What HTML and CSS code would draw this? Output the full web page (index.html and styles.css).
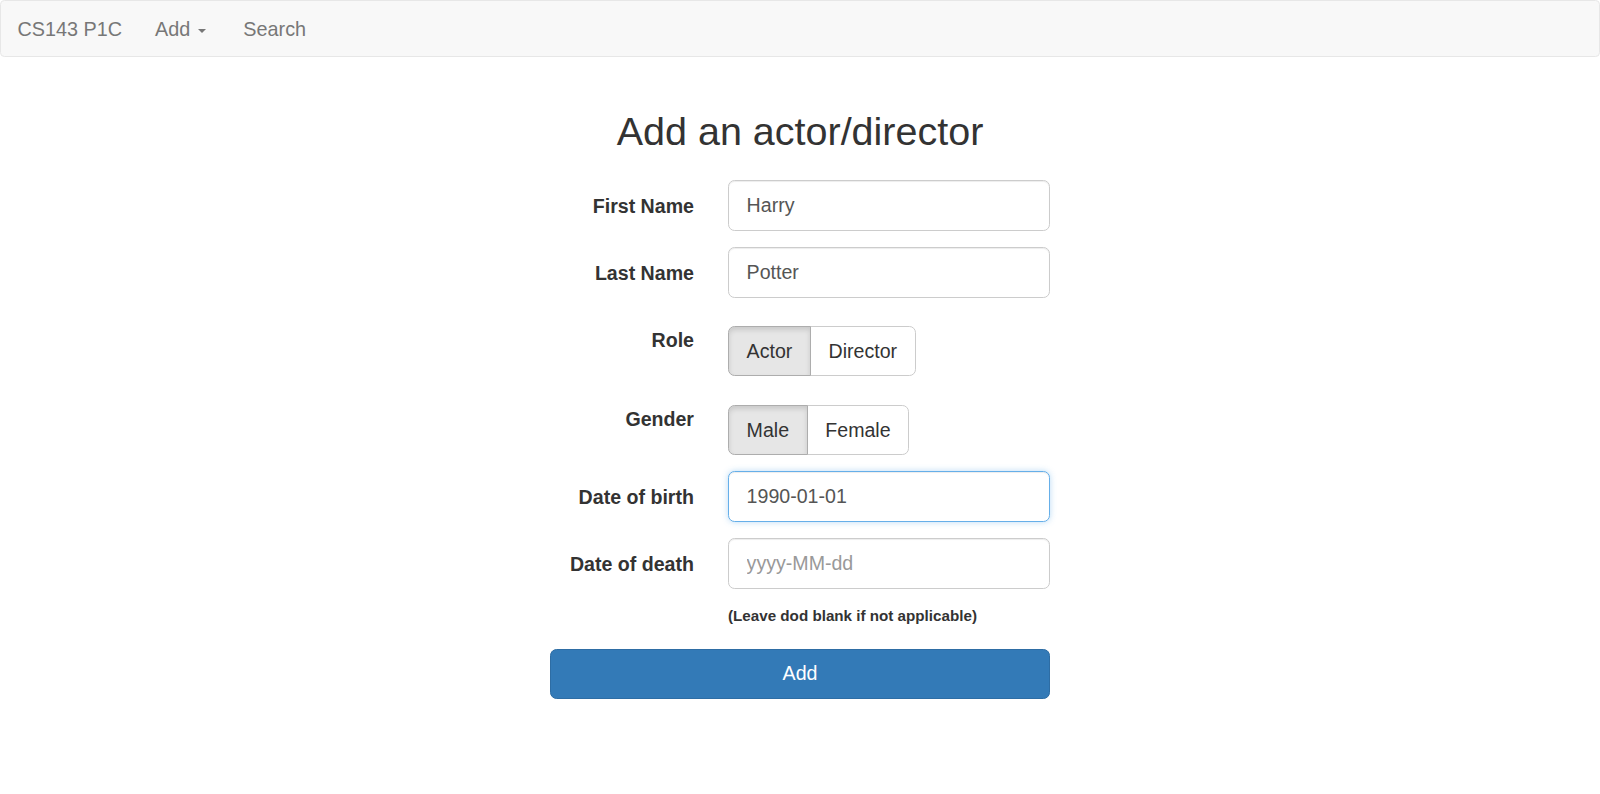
FILE: index.html
```html
<!DOCTYPE html>
<html lang="en">
<head>
<meta charset="utf-8">
<title>CS143 P1C - Add an actor/director</title>
<link rel="stylesheet" href="styles.css">
</head>
<body>
<nav class="navbar">
  <a class="brand" href="#">CS143 P1C</a>
  <a class="nav-link dropdown" href="#">Add <span class="caret"></span></a>
  <a class="nav-link" href="#">Search</a>
</nav>
<main class="page">
  <h1 class="title">Add an actor/director</h1>
  <form class="form">
    <label class="label" for="first">First Name</label>
    <div class="control"><input class="input" id="first" type="text" value="Harry"></div>

    <label class="label" for="last">Last Name</label>
    <div class="control"><input class="input" id="last" type="text" value="Potter"></div>

    <label class="label">Role</label>
    <div class="control control-group">
      <div class="btn-group">
        <span class="btn active">Actor</span><span class="btn">Director</span>
      </div>
    </div>

    <label class="label">Gender</label>
    <div class="control control-group">
      <div class="btn-group">
        <span class="btn active">Male</span><span class="btn">Female</span>
      </div>
    </div>

    <label class="label" for="dob">Date of birth</label>
    <div class="control"><input class="input focus" id="dob" type="text" value="1990-01-01"></div>

    <label class="label" for="dod">Date of death</label>
    <div class="control"><input class="input" id="dod" type="text" placeholder="yyyy-MM-dd"></div>

    <p class="help">(Leave dod blank if not applicable)</p>

    <button class="submit" type="button">Add</button>
  </form>
</main>
</body>
</html>
```

FILE: styles.css
```css
* { box-sizing: border-box; }

html, body {
  margin: 0;
  padding: 0;
  background: #fff;
}

body {
  font-family: "Liberation Sans", Arial, Helvetica, sans-serif;
  color: #333;
  font-size: 15.4px;
}

.navbar {
  display: flex;
  align-items: flex-start;
  height: 57px;
  background: #f8f8f8;
  border: 1px solid #e7e7e7;
  border-radius: 4.4px;
}

.brand, .nav-link {
  display: block;
  padding: 17px 16.5px 15px;
  font-size: 19.8px;
  line-height: 22px;
  color: #777;
  text-decoration: none;
}

.dropdown {
  padding-right: 21px;
}

.caret {
  display: inline-block;
  width: 0;
  height: 0;
  margin-left: 2.2px;
  vertical-align: middle;
  border-top: 4.4px solid #777;
  border-left: 4.4px solid transparent;
  border-right: 4.4px solid transparent;
}

.page {
  width: 100%;
}

.title {
  margin: 52px 0 27px;
  font-size: 39.5px;
  line-height: 44px;
  font-weight: 400;
  text-align: center;
  color: #333;
}

.form {
  display: grid;
  grid-template-columns: 144px 322px;
  column-gap: 34px;
  row-gap: 16.5px;
  width: 500px;
  margin: 0 auto;
}

.label {
  display: block;
  padding-top: 12.1px;
  font-size: 19.6px;
  line-height: 28.3px;
  font-weight: 700;
  text-align: right;
  color: #333;
}

.control-group {
  padding-top: 12px;
}

.input {
  display: block;
  width: 100%;
  height: 50.6px;
  padding: 0 17.6px;
  font-family: inherit;
  font-size: 19.6px;
  color: #555;
  background: #fff;
  border: 1px solid #ccc;
  border-radius: 6.6px;
  box-shadow: inset 0 1px 1px rgba(0, 0, 0, .075);
  outline: none;
}

.input::placeholder {
  color: #999;
}

.input.focus {
  border-color: #66afe9;
  box-shadow: inset 0 1px 1px rgba(0, 0, 0, .075), 0 0 6px rgba(102, 175, 233, .45);
}

.btn-group {
  display: inline-flex;
}

.btn {
  display: block;
  padding: 11px 17.6px;
  font-size: 19.6px;
  line-height: 26px;
  color: #333;
  background: #fff;
  border: 1px solid #ccc;
}

.btn:first-child {
  border-radius: 6.6px 0 0 6.6px;
}

.btn:last-child {
  margin-left: -1px;
  border-radius: 0 6.6px 6.6px 0;
}

.btn.active {
  position: relative;
  z-index: 1;
  background: #e6e6e6;
  border-color: #adadad;
  box-shadow: inset 0 3px 5px rgba(0, 0, 0, .125);
}

.help {
  grid-column: 2;
  margin: 1px 0 0;
  font-size: 15.2px;
  line-height: 20px;
  font-weight: 700;
  color: #333;
}

.submit {
  grid-column: 1 / -1;
  margin-top: 6px;
  height: 50px;
  padding: 0;
  font-family: inherit;
  font-size: 19.6px;
  color: #fff;
  background: #337ab7;
  border: 1px solid #2e6da4;
  border-radius: 6.6px;
}
```
